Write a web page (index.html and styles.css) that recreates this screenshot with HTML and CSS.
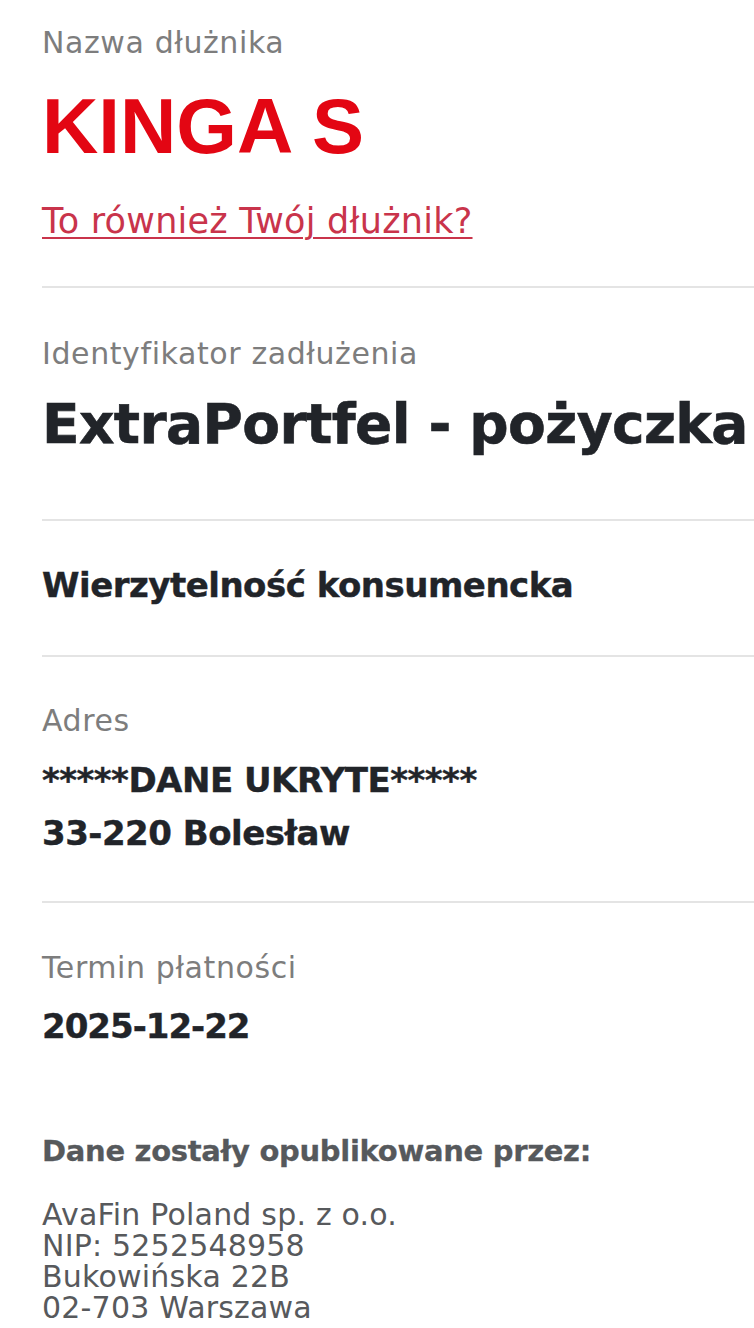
FILE: index.html
```html
<!DOCTYPE html>
<html lang="pl">
<head>
<meta charset="utf-8">
<title>KINGA S – dłużnik</title>
<link rel="stylesheet" href="styles.css">
</head>
<body>
<main class="page">
  <section class="block block--debtor">
    <p class="label">Nazwa dłużnika</p>
    <h1 class="debtor-name">KINGA S</h1>
    <a class="also-link" href="#">To również Twój dłużnik?</a>
  </section>
  <section class="block block--id">
    <p class="label">Identyfikator zadłużenia</p>
    <h2 class="debt-id">ExtraPortfel - pożyczka</h2>
  </section>
  <section class="block block--type">
    <p class="value">Wierzytelność konsumencka</p>
  </section>
  <section class="block block--address">
    <p class="label">Adres</p>
    <p class="value value--address">*****DANE UKRYTE*****<br>33-220 Bolesław</p>
  </section>
  <section class="block block--due">
    <p class="label">Termin płatności</p>
    <p class="value value--date">2025-12-22</p>
  </section>
  <section class="publisher">
    <p class="publisher-title">Dane zostały opublikowane przez:</p>
    <div class="publisher-info">
      <p class="publisher-line">AvaFin Poland sp. z o.o.</p>
      <p class="publisher-line">NIP: 5252548958</p>
      <p class="publisher-line">Bukowińska 22B</p>
      <p class="publisher-line">02-703 Warszawa</p>
    </div>
  </section>
</main>
</body>
</html>
```

FILE: styles.css
```css
html, body {
  margin: 0;
  padding: 0;
  background: #ffffff;
}

body {
  font-family: "DejaVu Sans", sans-serif;
  color: #212429;
  overflow: hidden;
}

.page {
  padding-left: 42px;
}

.page p,
.page h1,
.page h2 {
  margin: 0;
}

.block + .block {
  border-top: 2px solid #e4e4e4;
}

.label {
  font-size: 30px;
  line-height: 35px;
  letter-spacing: 0.6px;
  color: #7d7d7d;
  font-weight: 400;
  white-space: nowrap;
}

.block--debtor {
  padding-top: 25px;
  padding-bottom: 45px;
}

.debtor-name {
  margin-top: 21px !important;
  font-family: "Liberation Sans", Arial, sans-serif;
  font-weight: 700;
  font-size: 78px;
  line-height: 90px;
  color: #e30613;
}

.also-link {
  display: block;
  width: max-content;
  margin-top: 30px;
  font-size: 35px;
  line-height: 40px;
  letter-spacing: 0.25px;
  color: #c9344b;
  text-decoration: underline;
  text-decoration-thickness: 2px;
  text-underline-offset: 4px;
}

.block--id {
  padding-top: 47.5px;
  padding-bottom: 62px;
}

.debt-id {
  margin-top: 20.5px !important;
  font-size: 55px;
  line-height: 66px;
  font-weight: 700;
  letter-spacing: -0.6px;
  -webkit-text-stroke: 0.6px currentColor;
  white-space: nowrap;
}

.value {
  font-size: 34px;
  line-height: 40px;
  font-weight: 700;
  letter-spacing: -0.5px;
  -webkit-text-stroke: 0.4px currentColor;
  white-space: nowrap;
}

.block--type {
  padding-top: 44px;
  padding-bottom: 50px;
}

.block--address {
  padding-top: 45.5px;
  padding-bottom: 41.5px;
}

.value--address {
  margin-top: 16px !important;
  line-height: 53px;
}

.block--due {
  padding-top: 46.5px;
}

.value--date {
  margin-top: 21.7px !important;
  letter-spacing: -1px;
}

.publisher {
  margin-top: 88px;
}

.publisher-title {
  font-size: 29px;
  line-height: 35px;
  font-weight: 700;
  letter-spacing: -0.3px;
  -webkit-text-stroke: 0.3px currentColor;
  color: #56595c;
  white-space: nowrap;
}

.publisher-info {
  margin-top: 29.6px;
  display: flex;
  flex-direction: column;
}

.publisher-line {
  height: 31px;
  font-size: 30px;
  line-height: 31px;
  letter-spacing: 0.2px;
  color: #57595c;
  white-space: nowrap;
}
```
